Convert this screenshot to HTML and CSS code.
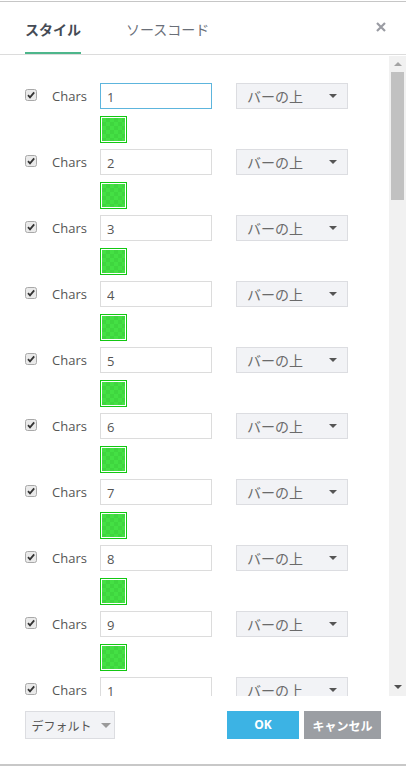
FILE: index.html
```html
<!DOCTYPE html>
<html lang="ja">
<head>
    <meta charset="UTF-8">
    <meta name="viewport" content="width=device-width, initial-scale=1.0">
    <title>スタイル</title>
    <link rel="stylesheet" href="styles.css">
</head>
<body>
    <div class="dialog">
        <header class="dialog-header">
            <nav class="tabs">
                <a href="#" class="tab tab--active">スタイル</a>
                <a href="#" class="tab">ソースコード</a>
            </nav>
            <button class="close-btn" aria-label="閉じる">
                <svg width="10" height="10" viewBox="0 0 10 10"><path d="M1 1 L9 9 M9 1 L1 9" stroke="#9a9ca3" stroke-width="2.2" fill="none"/></svg>
            </button>
        </header>

        <div class="scroll-area">
            <div class="rows">
                <div class="row">
                    <div class="row-main">
                        <span class="check"><svg width="12" height="12" viewBox="0 0 12 12"><rect x="0.5" y="0.5" width="11" height="11" rx="2" class="check-box"/><path d="M3 6.2 L5 8.3 L9.2 3.4" stroke="#333" stroke-width="1.8" fill="none"/></svg></span>
                        <span class="label">Chars</span>
                        <input class="text-input text-input--focus" type="text" value="1">
                        <div class="select">バーの上<span class="caret"></span></div>
                    </div>
                    <div class="swatch"><span></span></div>
                </div>
                <div class="row">
                    <div class="row-main">
                        <span class="check"><svg width="12" height="12" viewBox="0 0 12 12"><rect x="0.5" y="0.5" width="11" height="11" rx="2" class="check-box"/><path d="M3 6.2 L5 8.3 L9.2 3.4" stroke="#333" stroke-width="1.8" fill="none"/></svg></span>
                        <span class="label">Chars</span>
                        <input class="text-input" type="text" value="2">
                        <div class="select">バーの上<span class="caret"></span></div>
                    </div>
                    <div class="swatch"><span></span></div>
                </div>
                <div class="row">
                    <div class="row-main">
                        <span class="check"><svg width="12" height="12" viewBox="0 0 12 12"><rect x="0.5" y="0.5" width="11" height="11" rx="2" class="check-box"/><path d="M3 6.2 L5 8.3 L9.2 3.4" stroke="#333" stroke-width="1.8" fill="none"/></svg></span>
                        <span class="label">Chars</span>
                        <input class="text-input" type="text" value="3">
                        <div class="select">バーの上<span class="caret"></span></div>
                    </div>
                    <div class="swatch"><span></span></div>
                </div>
                <div class="row">
                    <div class="row-main">
                        <span class="check"><svg width="12" height="12" viewBox="0 0 12 12"><rect x="0.5" y="0.5" width="11" height="11" rx="2" class="check-box"/><path d="M3 6.2 L5 8.3 L9.2 3.4" stroke="#333" stroke-width="1.8" fill="none"/></svg></span>
                        <span class="label">Chars</span>
                        <input class="text-input" type="text" value="4">
                        <div class="select">バーの上<span class="caret"></span></div>
                    </div>
                    <div class="swatch"><span></span></div>
                </div>
                <div class="row">
                    <div class="row-main">
                        <span class="check"><svg width="12" height="12" viewBox="0 0 12 12"><rect x="0.5" y="0.5" width="11" height="11" rx="2" class="check-box"/><path d="M3 6.2 L5 8.3 L9.2 3.4" stroke="#333" stroke-width="1.8" fill="none"/></svg></span>
                        <span class="label">Chars</span>
                        <input class="text-input" type="text" value="5">
                        <div class="select">バーの上<span class="caret"></span></div>
                    </div>
                    <div class="swatch"><span></span></div>
                </div>
                <div class="row">
                    <div class="row-main">
                        <span class="check"><svg width="12" height="12" viewBox="0 0 12 12"><rect x="0.5" y="0.5" width="11" height="11" rx="2" class="check-box"/><path d="M3 6.2 L5 8.3 L9.2 3.4" stroke="#333" stroke-width="1.8" fill="none"/></svg></span>
                        <span class="label">Chars</span>
                        <input class="text-input" type="text" value="6">
                        <div class="select">バーの上<span class="caret"></span></div>
                    </div>
                    <div class="swatch"><span></span></div>
                </div>
                <div class="row">
                    <div class="row-main">
                        <span class="check"><svg width="12" height="12" viewBox="0 0 12 12"><rect x="0.5" y="0.5" width="11" height="11" rx="2" class="check-box"/><path d="M3 6.2 L5 8.3 L9.2 3.4" stroke="#333" stroke-width="1.8" fill="none"/></svg></span>
                        <span class="label">Chars</span>
                        <input class="text-input" type="text" value="7">
                        <div class="select">バーの上<span class="caret"></span></div>
                    </div>
                    <div class="swatch"><span></span></div>
                </div>
                <div class="row">
                    <div class="row-main">
                        <span class="check"><svg width="12" height="12" viewBox="0 0 12 12"><rect x="0.5" y="0.5" width="11" height="11" rx="2" class="check-box"/><path d="M3 6.2 L5 8.3 L9.2 3.4" stroke="#333" stroke-width="1.8" fill="none"/></svg></span>
                        <span class="label">Chars</span>
                        <input class="text-input" type="text" value="8">
                        <div class="select">バーの上<span class="caret"></span></div>
                    </div>
                    <div class="swatch"><span></span></div>
                </div>
                <div class="row">
                    <div class="row-main">
                        <span class="check"><svg width="12" height="12" viewBox="0 0 12 12"><rect x="0.5" y="0.5" width="11" height="11" rx="2" class="check-box"/><path d="M3 6.2 L5 8.3 L9.2 3.4" stroke="#333" stroke-width="1.8" fill="none"/></svg></span>
                        <span class="label">Chars</span>
                        <input class="text-input" type="text" value="9">
                        <div class="select">バーの上<span class="caret"></span></div>
                    </div>
                    <div class="swatch"><span></span></div>
                </div>
                <div class="row">
                    <div class="row-main">
                        <span class="check"><svg width="12" height="12" viewBox="0 0 12 12"><rect x="0.5" y="0.5" width="11" height="11" rx="2" class="check-box"/><path d="M3 6.2 L5 8.3 L9.2 3.4" stroke="#333" stroke-width="1.8" fill="none"/></svg></span>
                        <span class="label">Chars</span>
                        <input class="text-input" type="text" value="1">
                        <div class="select">バーの上<span class="caret"></span></div>
                    </div>
                    <div class="swatch"><span></span></div>
                </div>
            </div>

            <div class="scrollbar">
                <span class="scroll-arrow scroll-arrow--up"></span>
                <div class="scroll-track"><div class="scroll-thumb"></div></div>
                <span class="scroll-arrow scroll-arrow--down"></span>
            </div>
        </div>

        <footer class="dialog-footer">
            <button class="btn btn--default">デフォルト<span class="caret caret--light"></span></button>
            <div class="footer-actions">
                <button class="btn btn--ok">OK</button>
                <button class="btn btn--cancel">キャンセル</button>
            </div>
        </footer>
    </div>
</body>
</html>
```

FILE: styles.css
```css
* {
    margin: 0;
    padding: 0;
    box-sizing: border-box;
}

body {
    font-family: 'Open Sans', 'Noto Sans CJK JP', sans-serif;
    font-size: 13px;
    color: #555;
    background-color: #fff;
}

/* 다이얼로그 */
.dialog {
    width: 406px;
    height: 765px;
    margin-top: 1px;
    border-top: 1px solid #c6c6c6;
    border-bottom: 2px solid #c8c8c8;
    display: flex;
    flex-direction: column;
}

/* 헤더 */
.dialog-header {
    height: 53px;
    display: flex;
    justify-content: space-between;
    border-bottom: 1px solid #dcdcdc;
    padding: 0 20px 0 25px;
}

.tabs {
    display: flex;
    gap: 45px;
}

.tab {
    display: flex;
    align-items: center;
    padding-top: 3px;
    font-family: 'Noto Sans CJK JP', sans-serif;
    font-size: 14px;
    color: #6a6f78;
    text-decoration: none;
    border-bottom: 2px solid transparent;
}

.tab--active {
    font-weight: bold;
    color: #454b55;
    border-bottom-color: #4db68b;
}

.close-btn {
    border: none;
    background: none;
    height: 50px;
    display: flex;
    align-items: center;
}

/* 스크롤 영역 */
.scroll-area {
    height: 641px;
    display: flex;
    overflow: hidden;
}

.rows {
    flex: 1;
    padding: 28px 0 0 25px;
    overflow: hidden;
}

.row {
    display: flex;
    flex-direction: column;
    gap: 7px;
    margin-bottom: 6px;
}

.row-main {
    display: flex;
    align-items: center;
    height: 26px;
}

.check {
    display: flex;
    width: 12px;
    height: 12px;
    margin-top: -2px;
}

.check-box {
    fill: #eaeaea;
    stroke: #a9a9a9;
}

.label {
    margin-left: 15px;
    width: 48px;
    color: #555;
}

.text-input {
    width: 112px;
    height: 26px;
    border: 1px solid #dcdcdc;
    padding: 2px 6px 0;
    font-family: 'Open Sans', sans-serif;
    font-size: 13px;
    color: #555;
    outline: none;
}

.text-input--focus {
    border-color: #5db5dd;
}

.select {
    margin-left: 24px;
    width: 112px;
    height: 26px;
    background-color: #f2f3f6;
    border: 1px solid #dcdde1;
    padding: 0 10px;
    display: flex;
    align-items: center;
    justify-content: space-between;
    font-family: 'Noto Sans CJK JP', sans-serif;
    font-size: 14px;
    color: #6a6a6a;
}

.caret {
    width: 0;
    height: 0;
    border-left: 4px solid transparent;
    border-right: 4px solid transparent;
    border-top: 4px solid #555;
}

.caret--light {
    border-left-width: 5px;
    border-right-width: 5px;
    border-top: 5px solid #9a9a9a;
    margin-left: 9px;
}

.swatch {
    margin-left: 75px;
    width: 27px;
    height: 27px;
    border: 1px solid #12c812;
    padding: 1px;
    background-color: #fff;
}

.swatch span {
    display: block;
    width: 100%;
    height: 100%;
    background-color: #44e044;
    background-image: conic-gradient(#3fd63f 25%, transparent 0 50%, #3fd63f 0 75%, transparent 0);
    background-size: 8px 8px;
}

/* 가짜 스크롤바 */
.scrollbar {
    width: 17px;
    margin-top: 1px;
    background-color: #f1f1f1;
    display: flex;
    flex-direction: column;
    align-items: center;
}

.scroll-arrow {
    width: 0;
    height: 0;
    border-left: 4px solid transparent;
    border-right: 4px solid transparent;
}

.scroll-arrow--up {
    margin: 6px 0 6px;
    border-bottom: 4px solid #a3a3a3;
}

.scroll-arrow--down {
    margin: 6px 0 7px;
    border-top: 4px solid #505050;
}

.scroll-track {
    flex: 1;
    width: 100%;
    padding: 0 2px;
}

.scroll-thumb {
    height: 128px;
    background-color: #c1c1c1;
}

/* 푸터 */
.dialog-footer {
    flex: 1;
    display: flex;
    justify-content: space-between;
    align-items: flex-start;
    padding: 15px 25px 0 25px;
}

.footer-actions {
    display: flex;
    gap: 5px;
}

.btn {
    height: 28px;
    border: none;
    font-family: 'Noto Sans CJK JP', sans-serif;
    font-size: 12px;
    display: flex;
    align-items: center;
    justify-content: center;
}

.btn--default {
    width: 90px;
    background-color: #f2f3f6;
    border: 1px solid #dcdde1;
    color: #555;
    padding-left: 2px;
}

.btn--ok {
    width: 72px;
    background-color: #3cb3e4;
    color: #fff;
    font-family: 'Open Sans', sans-serif;
    font-weight: bold;
    padding-bottom: 2px;
}

.btn--cancel {
    width: 77px;
    background-color: #9b9ea3;
    color: #fff;
    font-weight: bold;
}
```
